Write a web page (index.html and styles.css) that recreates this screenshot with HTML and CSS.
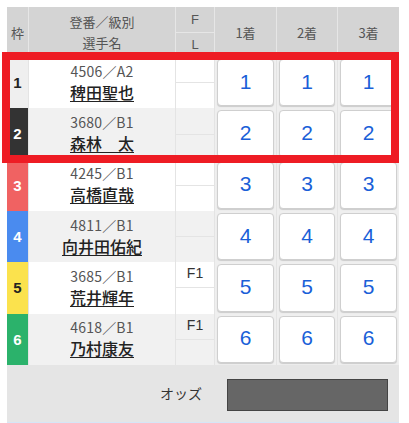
FILE: index.html
```html
<!DOCTYPE html>
<html lang="ja">
<head>
<meta charset="utf-8">
<title>出走表</title>
<link rel="stylesheet" href="styles.css">
</head>
<body>
<div class="race">
  <div class="head">
    <div class="hc h-waku">枠</div>
    <div class="hc h-player"><span>登番／級別</span><span>選手名</span></div>
    <div class="hc h-fl"><span class="h-f">F</span><span class="h-l">L</span></div>
    <div class="hc h-bet">1着</div>
    <div class="hc h-bet">2着</div>
    <div class="hc h-bet">3着</div>
  </div>

  <div class="row odd">
    <div class="waku w1">1</div>
    <div class="player"><span class="reg">4506／A2</span><span class="name">稗田聖也</span></div>
    <div class="fl"><span class="f"></span><span class="l"></span></div>
    <div class="bet"><button class="btn">1</button></div>
    <div class="bet"><button class="btn">1</button></div>
    <div class="bet"><button class="btn">1</button></div>
  </div>
  <div class="row even">
    <div class="waku w2">2</div>
    <div class="player"><span class="reg">3680／B1</span><span class="name">森林　太</span></div>
    <div class="fl"><span class="f"></span><span class="l"></span></div>
    <div class="bet"><button class="btn">2</button></div>
    <div class="bet"><button class="btn">2</button></div>
    <div class="bet"><button class="btn">2</button></div>
  </div>
  <div class="row odd">
    <div class="waku w3">3</div>
    <div class="player"><span class="reg">4245／B1</span><span class="name">高橋直哉</span></div>
    <div class="fl"><span class="f"></span><span class="l"></span></div>
    <div class="bet"><button class="btn">3</button></div>
    <div class="bet"><button class="btn">3</button></div>
    <div class="bet"><button class="btn">3</button></div>
  </div>
  <div class="row even">
    <div class="waku w4">4</div>
    <div class="player"><span class="reg">4811／B1</span><span class="name">向井田佑紀</span></div>
    <div class="fl"><span class="f"></span><span class="l"></span></div>
    <div class="bet"><button class="btn">4</button></div>
    <div class="bet"><button class="btn">4</button></div>
    <div class="bet"><button class="btn">4</button></div>
  </div>
  <div class="row odd">
    <div class="waku w5">5</div>
    <div class="player"><span class="reg">3685／B1</span><span class="name">荒井輝年</span></div>
    <div class="fl"><span class="f">F1</span><span class="l"></span></div>
    <div class="bet"><button class="btn">5</button></div>
    <div class="bet"><button class="btn">5</button></div>
    <div class="bet"><button class="btn">5</button></div>
  </div>
  <div class="row even">
    <div class="waku w6">6</div>
    <div class="player"><span class="reg">4618／B1</span><span class="name">乃村康友</span></div>
    <div class="fl"><span class="f">F1</span><span class="l"></span></div>
    <div class="bet"><button class="btn">6</button></div>
    <div class="bet"><button class="btn">6</button></div>
    <div class="bet"><button class="btn">6</button></div>
  </div>

  <div class="odds">
    <span class="odds-label">オッズ</span>
    <div class="odds-box"></div>
  </div>

  <div class="pick"></div>
</div>
</body>
</html>
```

FILE: styles.css
```css
* { box-sizing: border-box; }

body {
  margin: 0;
  background: #fff;
  font-family: "Noto Sans CJK JP", "Liberation Sans", sans-serif;
  color: #333;
}

.race {
  position: relative;
  margin: 7px 0 0 7px;
  width: 392px;
  border-bottom: 1px solid #d6e6f7;
}

.head,
.row {
  display: grid;
  grid-template-columns: 22px 147px 39px 62px 61px 61px;
}

.head {
  height: 50px;
  background: #d4d4d4;
}

.hc {
  border-right: 1px solid #e6e6e6;
  color: #555;
  font-size: 13px;
  display: flex;
  align-items: center;
  justify-content: center;
}

.hc:last-child { border-right: none; }

.h-player {
  flex-direction: column;
  line-height: 21px;
}

.h-fl {
  flex-direction: column;
  align-items: stretch;
}

.h-f,
.h-l {
  flex: 1;
  display: flex;
  align-items: center;
  justify-content: center;
  font-family: "Liberation Sans", sans-serif;
  font-size: 13px;
}

.h-f { border-bottom: 1px solid #e6e6e6; }

.row {
  height: 51.33px;
}

.odd { background: #fff; }
.even { background: #f1f1f1; }

.waku {
  display: flex;
  align-items: center;
  justify-content: center;
  font-family: "Liberation Sans", sans-serif;
  font-weight: bold;
  font-size: 15px;
  color: #fff;
  border-right: 1px solid #e4e4e4;
}

.w1 { background: #efefef; color: #222; }
.w2 { background: #333333; }
.w3 { background: #f06262; }
.w4 { background: #4a8bef; }
.w5 { background: #fbe24d; color: #222; }
.w6 { background: #2bb26b; }

.player {
  display: flex;
  flex-direction: column;
  align-items: center;
  justify-content: center;
  border-right: 1px solid #e4e4e4;
  line-height: 21px;
  padding-bottom: 2px;
}

.reg {
  font-size: 14px;
  color: #555;
  letter-spacing: 0.2px;
}

.name {
  font-size: 16px;
  font-weight: 500;
  color: #222;
  text-decoration: underline;
  text-underline-offset: 2px;
}

.fl {
  display: flex;
  flex-direction: column;
  border-right: 1px solid #e4e4e4;
}

.f,
.l {
  flex: 1;
  display: flex;
  justify-content: center;
  align-items: flex-start;
  font-family: "Liberation Sans", sans-serif;
  font-size: 14px;
  color: #333;
  padding-top: 3px;
}

.f { border-bottom: 1px solid #e4e4e4; }

.bet {
  background: #efefef;
  border-right: 1px solid #e4e4e4;
  padding: 2px 2px 2px 2px;
  display: flex;
}

.bet:last-child { border-right: none; }

.btn {
  flex: 1;
  margin: 0;
  padding: 0 0 2px;
  background: #fff;
  border: 1px solid #cfcfcf;
  border-radius: 4px;
  box-shadow: 0 1px 1px rgba(0, 0, 0, 0.15);
  font-family: "Liberation Sans", sans-serif;
  font-size: 21px;
  color: #1a5fd8;
  cursor: pointer;
}

.odds {
  height: 57px;
  background: #e5e5e5;
  display: flex;
  align-items: center;
  justify-content: flex-end;
  padding-right: 11px;
  gap: 25px;
}

.odds-label {
  font-size: 14px;
  color: #333;
}

.odds-box {
  width: 161px;
  height: 32px;
  background: #666;
  border: 1px solid #444;
  margin-top: 3px;
}

.pick {
  position: absolute;
  left: -5px;
  top: 45px;
  width: 397px;
  height: 111px;
  border: 8px solid #ee1c24;
  pointer-events: none;
}
```
